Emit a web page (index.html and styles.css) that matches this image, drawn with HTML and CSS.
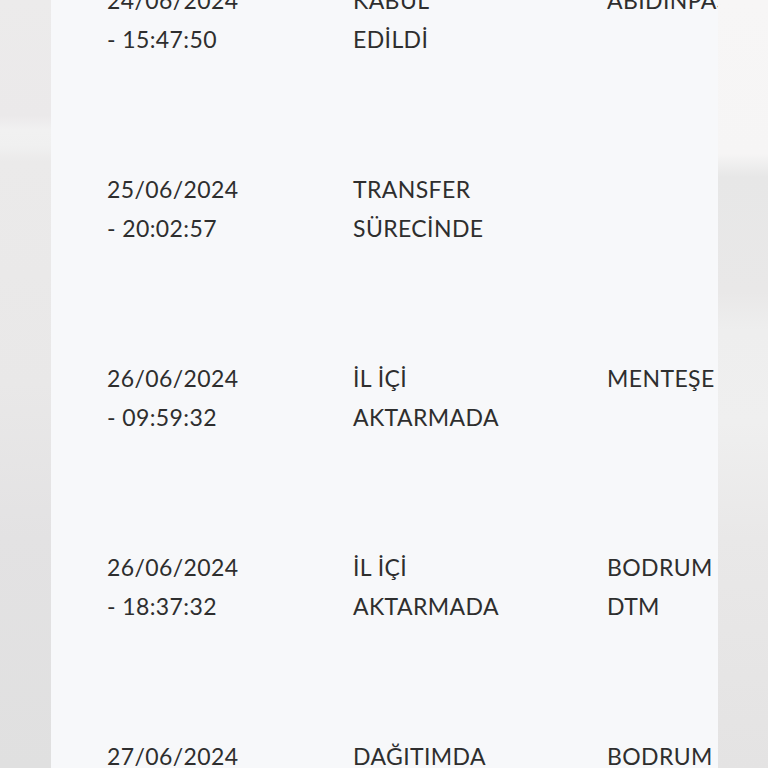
FILE: index.html
```html
<!DOCTYPE html>
<html lang="tr">
<head>
<meta charset="utf-8">
<title>Kargo Hareketleri</title>
<link rel="stylesheet" href="styles.css">
</head>
<body>
<div class="page">
  <div class="backdrop-left"></div>
  <main class="card">
    <div class="table">
      <div class="row">
        <div class="cell date">24/06/2024 - 15:47:50</div>
        <div class="cell status">KABUL EDİLDİ</div>
        <div class="cell place">ABİDİNPAŞA</div>
      </div>
      <div class="row">
        <div class="cell date">25/06/2024 - 20:02:57</div>
        <div class="cell status">TRANSFER SÜRECİNDE</div>
        <div class="cell place"></div>
      </div>
      <div class="row">
        <div class="cell date">26/06/2024 - 09:59:32</div>
        <div class="cell status">İL İÇİ AKTARMADA</div>
        <div class="cell place">MENTEŞE</div>
      </div>
      <div class="row">
        <div class="cell date">26/06/2024 - 18:37:32</div>
        <div class="cell status">İL İÇİ AKTARMADA</div>
        <div class="cell place">BODRUM YALIKAVAK DTM</div>
      </div>
      <div class="row">
        <div class="cell date">27/06/2024 - 10:14:08</div>
        <div class="cell status">DAĞITIMDA</div>
        <div class="cell place">BODRUM YALIKAVAK DTM</div>
      </div>
    </div>
  </main>
  <div class="backdrop-right"></div>
</div>
</body>
</html>
```
FILE: styles.css
```css
html, body {
  margin: 0;
  padding: 0;
  height: 100%;
  overflow: hidden;
}
body {
  background: #e9e9e9;
  font-family: "Lato", "Noto Sans", sans-serif;
  color: #2e2e2e;
}
.page {
  display: flex;
  height: 768px;
}
.backdrop-left {
  width: 51px;
  flex: none;
  background:
    linear-gradient(180deg, #ecebeb 0%, #ebe9ea 15%, #f1f1f1 17%, #f0f0f0 19%, #ebeaea 21%, #e9e8e8 50%, #e3e2e3 70%, #e0e0e0 100%);
}
.backdrop-right {
  width: 50px;
  flex: none;
  background:
    linear-gradient(180deg, #f7f6f6 0%, #f6f5f5 20%, #e7e7e7 23%, #e9e8e8 38%, #eeeeee 43%, #efefef 55%, #e9e8e8 70%, #e4e3e3 100%);
}
.card {
  width: 667px;
  flex: none;
  background: #f7f8fa;
  overflow: hidden;
  height: 768px;
}
.table {
  margin-top: -74px;
  padding-left: 56px;
}
.row {
  display: grid;
  grid-template-columns: 246px 254px 295px;
  padding: 55px 0 56px;
  font-size: 23px;
  line-height: 39px;
  letter-spacing: 0.4px;
}
.cell {
  min-width: 0;
}
.date {
  max-width: 140px;
}
.status {
  max-width: 152px;
}
```
